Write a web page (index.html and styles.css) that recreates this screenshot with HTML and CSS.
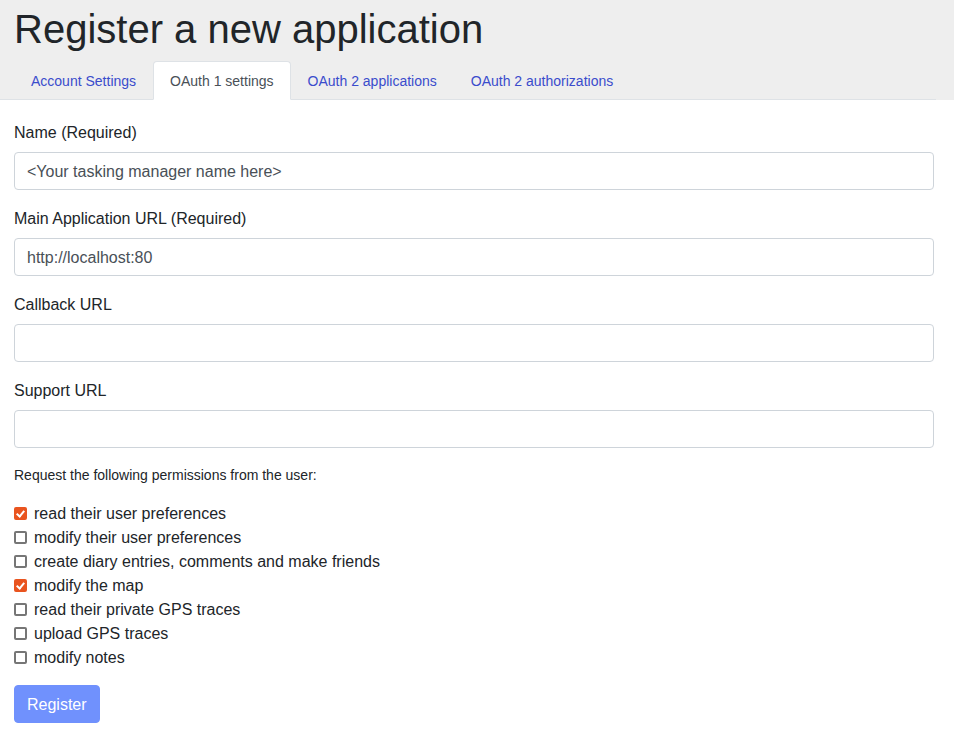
FILE: index.html
```html
<!DOCTYPE html>
<html>
<head>
<meta charset="utf-8">
<link rel="stylesheet" href="styles.css">
</head>
<body>
<header class="header">
  <h1 class="title">Register a new application</h1>
  <ul class="tabs">
    <li><a class="tab">Account Settings</a></li>
    <li><a class="tab active">OAuth 1 settings</a></li>
    <li><a class="tab">OAuth 2 applications</a></li>
    <li><a class="tab">OAuth 2 authorizations</a></li>
  </ul>
</header>
<form class="content">
  <div class="group">
    <label class="label">Name (Required)</label>
    <input class="input" type="text" value="&lt;Your tasking manager name here&gt;">
  </div>
  <div class="group">
    <label class="label">Main Application URL (Required)</label>
    <input class="input" type="text" value="http://localhost:80">
  </div>
  <div class="group">
    <label class="label">Callback URL</label>
    <input class="input" type="text">
  </div>
  <div class="group">
    <label class="label">Support URL</label>
    <input class="input" type="text">
  </div>
  <p class="note">Request the following permissions from the user:</p>
  <div class="checks">
    <label class="check"><input type="checkbox" checked> read their user preferences</label>
    <label class="check"><input type="checkbox"> modify their user preferences</label>
    <label class="check"><input type="checkbox"> create diary entries, comments and make friends</label>
    <label class="check"><input type="checkbox" checked> modify the map</label>
    <label class="check"><input type="checkbox"> read their private GPS traces</label>
    <label class="check"><input type="checkbox"> upload GPS traces</label>
    <label class="check"><input type="checkbox"> modify notes</label>
  </div>
  <button class="btn" type="button">Register</button>
</form>
</body>
</html>
```
FILE: styles.css
```css
html, body {
  margin: 0;
  padding: 0;
  background: #fff;
  font-family: "Liberation Sans", Arial, sans-serif;
  color: #212529;
}
.header {
  background: #eeeeee;
  height: 100px;
  display: flex;
  flex-direction: column;
  justify-content: flex-end;
}
.title {
  margin: 0 0 8px 14px;
  font-size: 40px;
  font-weight: 400;
  line-height: 1.2;
  color: #212529;
}
.tabs {
  list-style: none;
  margin: 0 18px 0 0;
  padding: 0 0 0 14px;
  display: flex;
  border-bottom: 1px solid #dee2e6;
}
.tabs li {
  margin-bottom: -1px;
}
.tab {
  display: block;
  padding: 9px 16px 7px;
  font-size: 14px;
  line-height: 21px;
  color: #3a4ccc;
  border: 1px solid transparent;
  border-radius: 4px 4px 0 0;
}
.tab.active {
  background: #fff;
  color: #495057;
  border-color: #dee2e6 #dee2e6 #fff;
}
.content {
  padding: 20px 20px 0 14px;
}
.group {
  margin-bottom: 16px;
}
.label {
  display: block;
  font-size: 16px;
  line-height: 24px;
  padding-top: 1px;
  margin-bottom: 7px;
}
.input {
  display: block;
  box-sizing: border-box;
  width: 100%;
  height: 38px;
  padding: 7px 12px 5px;
  font-family: inherit;
  font-size: 16px;
  line-height: 24px;
  color: #495057;
  border: 1px solid #ced4da;
  border-radius: 4px;
  background: #fff;
}
.note {
  margin: 0 0 15px;
  padding-top: 1px;
  font-size: 14px;
  line-height: 21px;
}
.checks {
  display: flex;
  flex-direction: column;
  margin-bottom: 16px;
}
.check {
  display: flex;
  align-items: center;
  box-sizing: border-box;
  font-size: 16px;
  line-height: 24px;
  padding-top: 1px;
  height: 24px;
}
.check input {
  appearance: none;
  -webkit-appearance: none;
  box-sizing: border-box;
  width: 13px;
  height: 13px;
  margin: 0 7px 0 0;
  border: 2px solid #767676;
  border-radius: 2px;
  background: #fff;
  position: relative;
}
.check input:checked {
  background: #e9541f;
  border-color: #e9541f;
}
.check input:checked::after {
  content: "";
  position: absolute;
  left: 2px;
  top: 0px;
  width: 3px;
  height: 6px;
  border: solid #fff;
  border-width: 0 2px 2px 0;
  transform: rotate(40deg);
}
.btn {
  display: block;
  height: 38px;
  padding: 7px 12px 5px;
  font-family: inherit;
  font-size: 16px;
  line-height: 24px;
  color: #fff;
  background: #7091fd;
  border: 1px solid #7091fd;
  border-radius: 4px;
}
```
